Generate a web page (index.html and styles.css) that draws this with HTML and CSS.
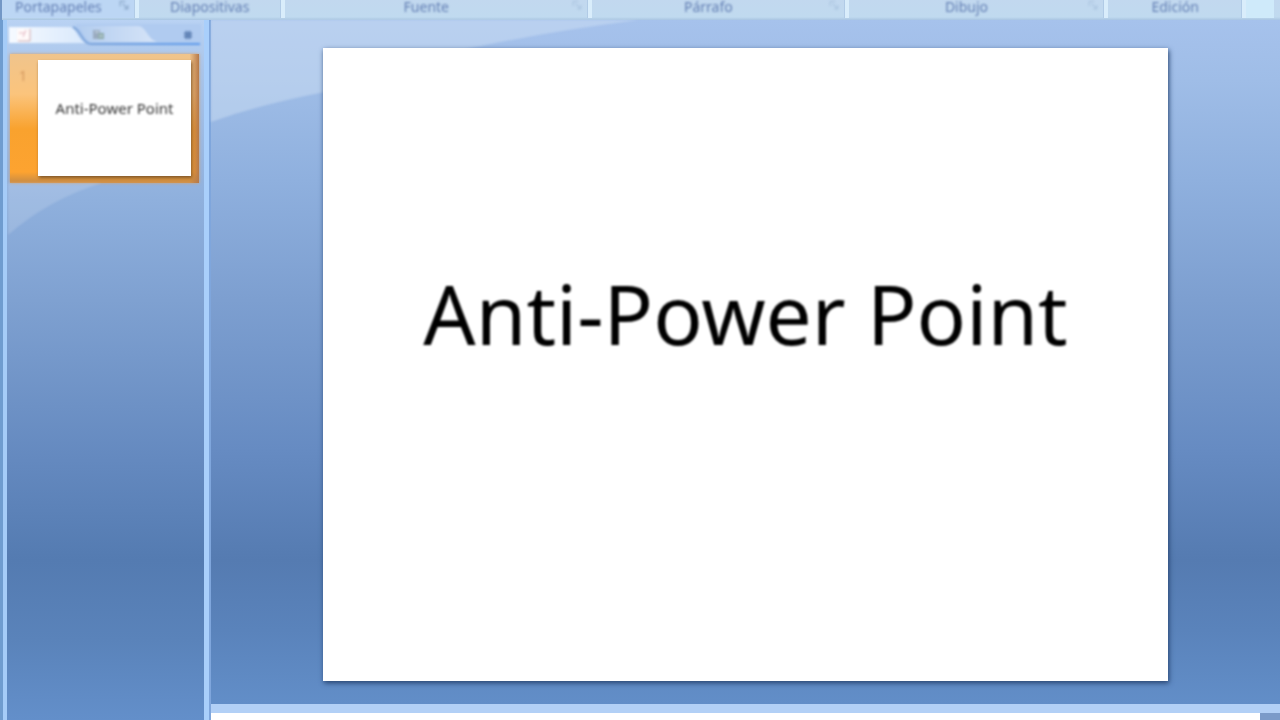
FILE: index.html
```html
<!DOCTYPE html>
<html lang="es">
<head>
<meta charset="utf-8">
<title>Anti-Power Point</title>
<link rel="stylesheet" href="styles.css">
</head>
<body>
<div class="app">
  <header class="ribbon">
    <div class="group clipboard"><span class="label">Portapapeles</span><button class="launcher" aria-label="Opciones de portapapeles"><svg viewBox="0 0 8 8"><path d="M1 5V1h4M3 3l4 4M7 4v3H4"/></svg></button></div>
    <div class="group"><span class="label">Diapositivas</span></div>
    <div class="group"><span class="label">Fuente</span><button class="launcher faint" aria-label="Opciones de fuente"><svg viewBox="0 0 8 8"><path d="M1 5V1h4M3 3l4 4M7 4v3H4"/></svg></button></div>
    <div class="group"><span class="label">Párrafo</span><button class="launcher faint" aria-label="Opciones de párrafo"><svg viewBox="0 0 8 8"><path d="M1 5V1h4M3 3l4 4M7 4v3H4"/></svg></button></div>
    <div class="group"><span class="label">Dibujo</span><button class="launcher faint" aria-label="Opciones de dibujo"><svg viewBox="0 0 8 8"><path d="M1 5V1h4M3 3l4 4M7 4v3H4"/></svg></button></div>
    <div class="group"><span class="label">Edición</span></div>
    <div class="ribbon-end"></div>
  </header>
  <div class="workspace">
    <aside class="sidebar">
      <nav class="tabs">
        <svg class="tab-shapes" viewBox="0 0 196 24" preserveAspectRatio="none" aria-hidden="true">
          <defs>
            <linearGradient id="active" x2="1"><stop offset="0" stop-color="#f6faff"/><stop offset=".6" stop-color="#e4effd"/><stop offset="1" stop-color="#d9e9fc"/></linearGradient>
            <linearGradient id="idle" x2="1"><stop offset="0" stop-color="#b3cdef"/><stop offset="1" stop-color="#d6e4f8"/></linearGradient>
            <linearGradient id="rim" x2="1"><stop offset="0" stop-color="#7ea4d8"/><stop offset="1" stop-color="#5c9aec"/></linearGradient>
          </defs>
          <path d="M68 2H196V22H84C76 22 74 14 68 2Z" fill="#b0cbf0"/>
          <path d="M72 4H132C140 4 142 18 152 20H84C78 17 76 9 72 4Z" fill="url(#idle)"/>
          <path d="M1 5H62C70 5 70 18 80 21H1Z" fill="url(#active)"/>
          <path d="M66 5C75 9 75 21 84 22H195" fill="none" stroke="url(#rim)" stroke-width="2"/>
        </svg>
        <button class="tab" aria-label="Diapositivas"><svg viewBox="0 0 16 16"><path d="M1 2h13v12H1z" fill="#fffafa"/><path d="M3 6h6M10 3l-3 7" stroke="#e2b5c0" fill="none"/><path d="M14 2v12H2" stroke="#cda8ad" fill="none"/></svg></button>
        <button class="tab" aria-label="Esquema"><svg viewBox="0 0 16 16"><path d="M3 3h7v9H3z" fill="#9aabc0"/><path d="M8 6h6v6H8z" fill="#8daaaa"/><path d="M5 5h4M9 9h4" stroke="#d3e0ed"/></svg></button>
        <button class="close" aria-label="Cerrar"><svg viewBox="0 0 10 10"><path d="M2 2l6 6M8 2l-6 6" stroke="#6486b8" stroke-width="4"/></svg></button>
      </nav>
      <div class="thumb-row">
        <span class="number">1</span>
        <button class="thumb"><span>Anti-Power Point</span></button>
      </div>
      <svg class="side-glow" viewBox="0 0 197 60" preserveAspectRatio="none" aria-hidden="true"><path d="M0 0H96Q42 16 0 52Z"/></svg>
    </aside>
    <main class="editor">
      <section class="stage">
        <svg class="glow" viewBox="0 0 420 104" preserveAspectRatio="none" aria-hidden="true"><path d="M0 0H420Q220 26 112 72Q50 84 0 102Z"/></svg>
        <article class="slide"><h1>Anti-Power Point</h1></article>
      </section>
      <div class="notes-row"><textarea class="notes" aria-label="Notas"></textarea><div class="scroll"></div></div>
    </main>
  </div>
</div>
</body>
</html>
```
FILE: styles.css
```css
* { box-sizing: border-box; }
body { margin: 0; font-family: "Noto Sans", "Open Sans", sans-serif; }
button { border: 0; padding: 0; background: none; font: inherit; }
svg { display: block; }

.app {
  display: flex;
  flex-direction: column;
  height: 100vh;
  overflow: hidden;
  background: #a3c0e8;
}

.ribbon {
  display: grid;
  grid-template-columns: 137fr 146fr 308fr 257fr 260fr 138fr 34fr;
  flex: 0 0 20px;
  background: linear-gradient(#c2d8ef, #c0daef 17px, #a9c5e2 20px);
  border-left: 2px solid #7397c6;
}
.group {
  display: flex;
  align-items: flex-start;
  min-width: 0;
  height: 18px;
  border-right: 4px solid #d9edfb;
  box-shadow: inset -1px 0 #b1cbe6;
}
.clipboard { background: #bcd6f4; }
.label {
  flex: 1;
  text-align: center;
  font-size: 14px;
  line-height: 13px;
  color: #6581b5;
  filter: blur(1px);
}
.launcher { width: 20px; padding: 0 6px 0 4px; filter: blur(1px); }
.launcher svg { width: 10px; height: 10px; fill: none; stroke: #8fabcc; }
.faint { opacity: .4; }
.ribbon-end { height: 18px; margin: 0 6px 0 0; background: #cfeafa; }

.workspace { display: flex; flex: 1; min-height: 0; }

.sidebar {
  flex: 0 0 211px;
  border-left: 3px solid #6f9ccf;
  border-right: 2px solid #7fa6dc;
  box-shadow: inset 4px 0 #a5ccf8, inset -5px 0 #a9cffb;
  padding: 0 8px 0 5px;
  background: linear-gradient(#b9d2f3 0, #a9c5ea 50px, #8fb0dd 180px, #7fa1d1 280px, #6489bf 440px, #547bb1 540px, #5a83ba 620px, #638fca 700px);
}
.tabs {
  position: relative;
  display: flex;
  align-items: center;
  height: 30px;
  padding: 0 8px 0 8px;
}
.tab-shapes { position: absolute; left: 0; top: 2px; width: 100%; height: 24px; filter: blur(1px); }
.tab, .close { position: relative; filter: blur(1px); }
.tab svg { width: 16px; height: 16px; }
.tab + .tab { margin-left: 58px; }
.close { margin-left: auto; }
.close svg { width: 10px; height: 10px; }

.thumb-row {
  display: flex;
  margin: 4px 2px 0 2px;
  padding: 6px 8px 7px 0;
  background: linear-gradient(90deg, #b67a4a00 95%, #b67a4a), linear-gradient(#f0c48c 0, #fbc47c 40px, #f9a22e 75px, #fda330 118px, #d08f42 127px, #cf9352);
  box-shadow: 0 0 3px #d3a06e;
}
.number {
  flex: 0 0 28px;
  padding-left: 9px;
  font-size: 14px;
  line-height: 32px;
  color: #d59a60;
  filter: blur(1px);
}
.thumb {
  flex: 1;
  min-width: 0;
  aspect-ratio: 154 / 117;
  padding-bottom: 20px;
  background: #fff;
  box-shadow: 1px 2px 3px #80582c;
  font-size: 15px;
  line-height: 20px;
  color: #333;
  white-space: nowrap;
}
.thumb span { display: block; filter: blur(1px); }
.side-glow { width: 100%; height: 60px; fill: #ffffff26; filter: blur(1px); }

.editor { display: flex; flex-direction: column; flex: 1; min-width: 0; }
.stage {
  position: relative;
  display: flex;
  justify-content: center;
  padding: 28px 0 23px;
  background: linear-gradient(#a6c2ec 0, #9fbde7 60px, #8fb0de 160px, #7d9fd0 280px, #668bc2 430px, #557bb1 540px, #5a83bb 610px, #628ec8 684px);
}
.glow {
  position: absolute;
  left: 0;
  top: 0;
  width: 40%;
  height: 104px;
  fill: #d0e0f477;
  filter: blur(1px);
}
.slide {
  position: relative;
  width: 79%;
  aspect-ratio: 4 / 3;
  padding-top: 208px;
  background: #fff;
  box-shadow: 1px 2px 5px #26436f;
}
h1 {
  margin: 0;
  text-align: center;
  font-size: 82px;
  font-weight: 400;
  line-height: 114px;
  color: #000;
  white-space: nowrap;
  filter: blur(1px);
}
.notes-row { display: flex; flex: 1; min-height: 16px; border-top: 9px solid #b2d0f6; background: #fff; }
.notes { flex: 1; height: 100%; border: 0; padding: 0; resize: none; background: #fff; }
.scroll { width: 20px; background: #7b9bc9; }
```
